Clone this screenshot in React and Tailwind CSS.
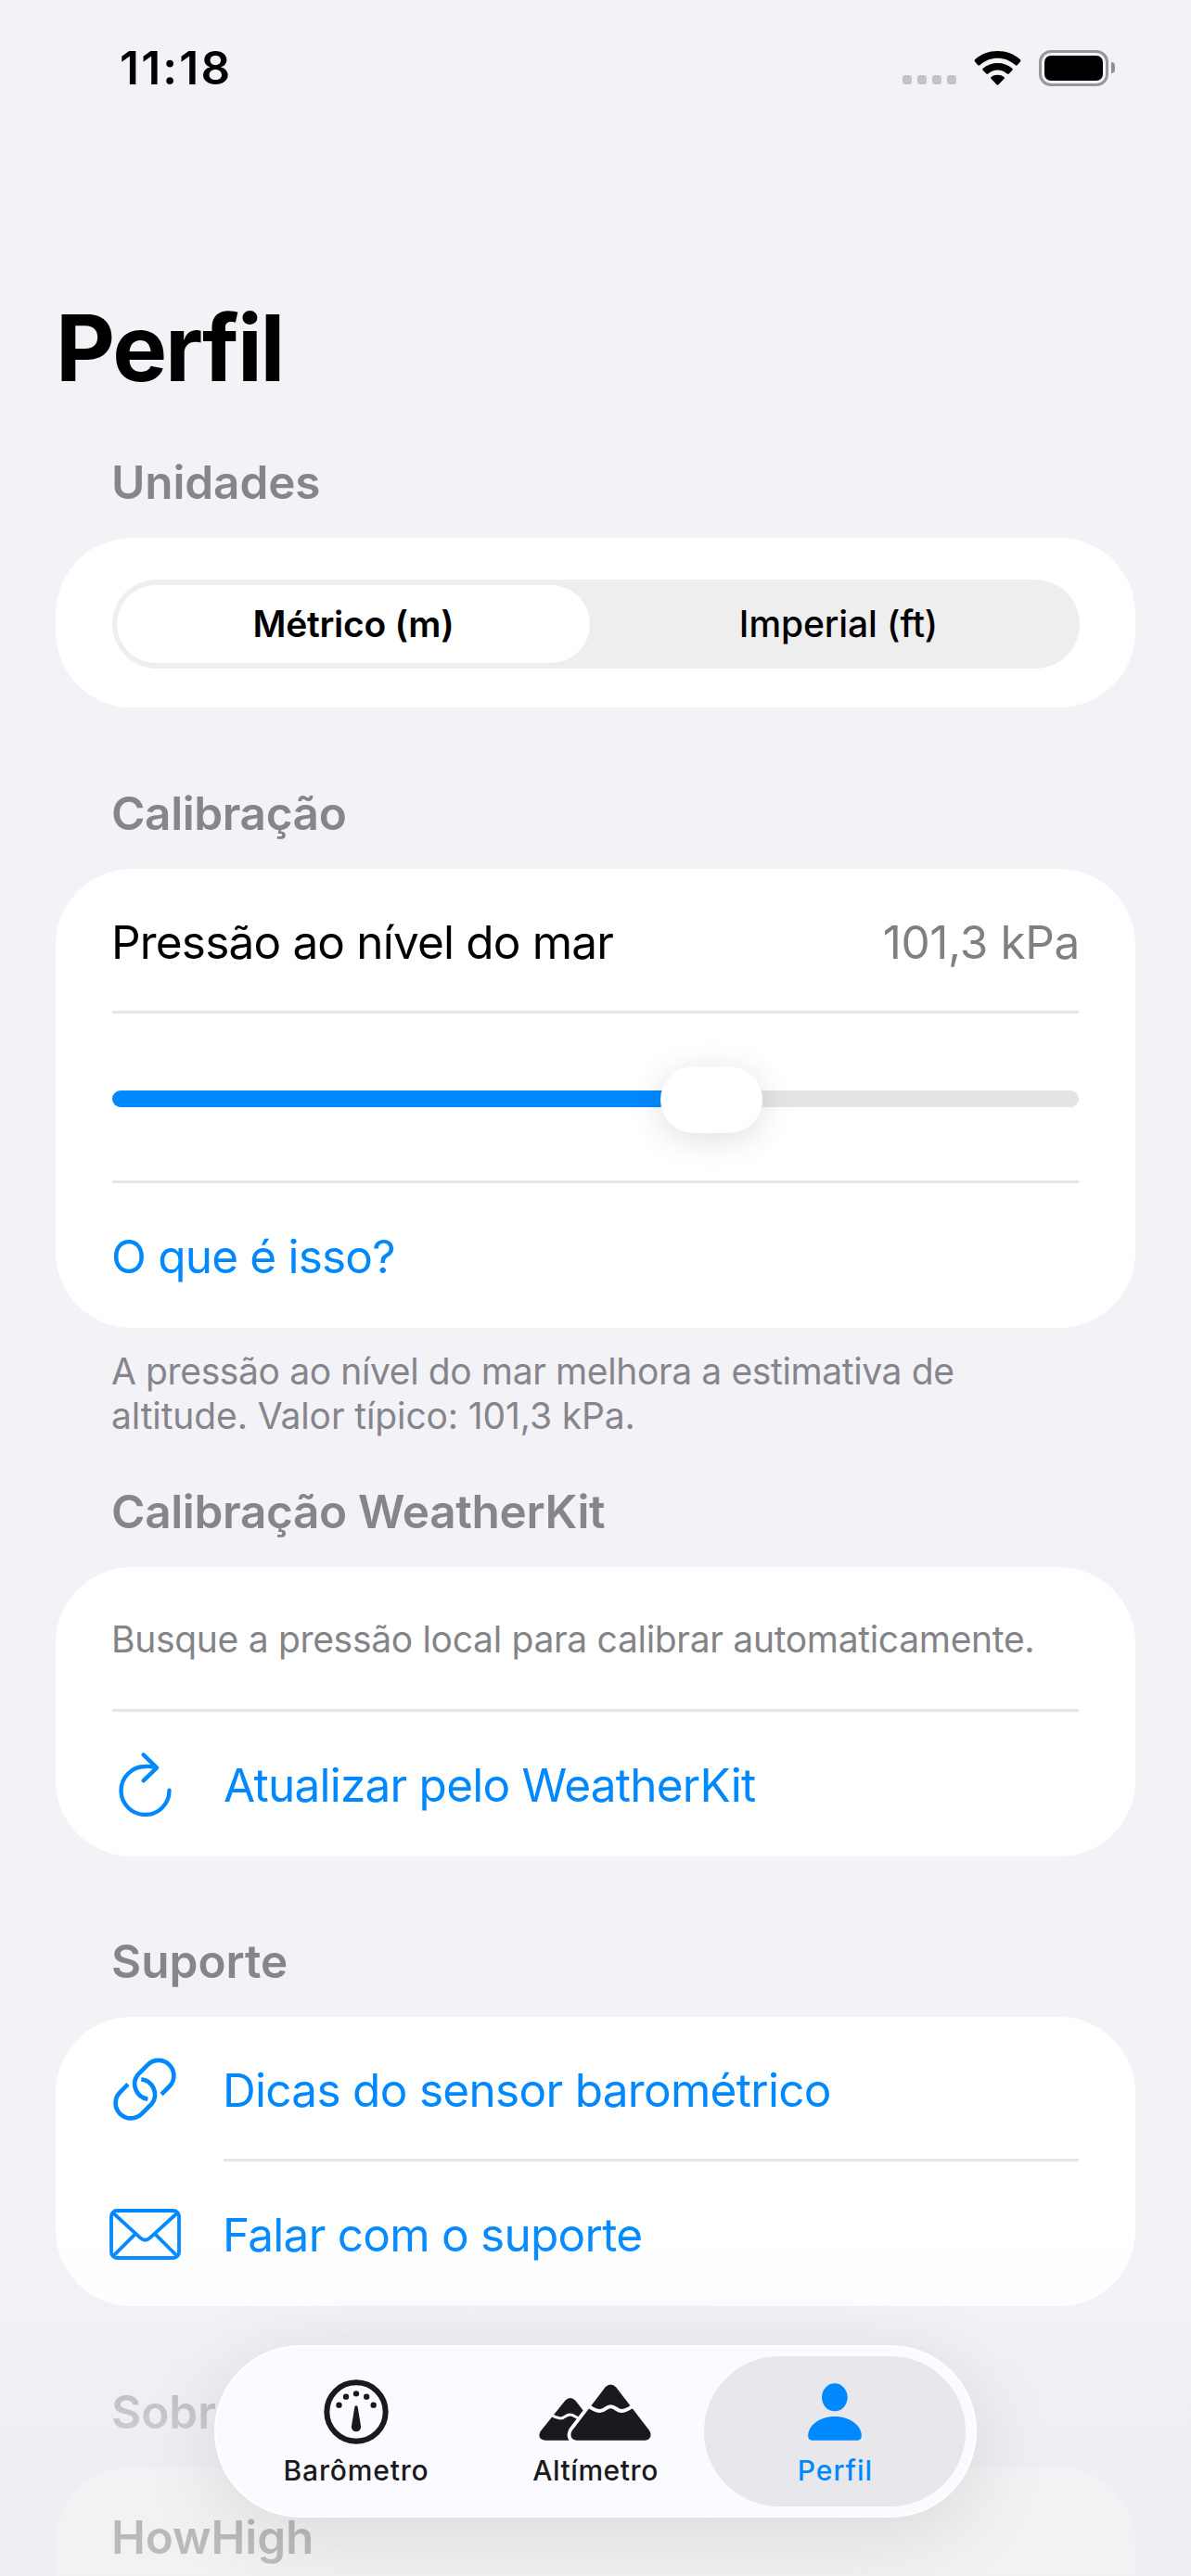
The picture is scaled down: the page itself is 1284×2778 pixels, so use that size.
import React from "react";

function SectionHeader({ children, className = "" }) {
  return (
    <h2 className={`flex h-[120px] items-center pl-[61px] text-[49.5px] font-semibold text-[#85858b] ${className}`}>
      <span className="-ml-px">{children}</span>
    </h2>
  );
}

function Card({ children, className = "" }) {
  return <div className={`rounded-[82px] bg-white px-[61px] ${className}`}>{children}</div>;
}

function LinkRow({ icon, children, divider, className = "" }) {
  return (
    <div className="flex h-[156px] text-[#0088ff]">
      <div className="mr-[50px] flex w-[70px] items-center justify-center">{icon}</div>
      <div
        className={`flex flex-1 items-center text-[49.5px] ${
          divider ? "border-b-[3px] border-[#e6e6e6] pt-[5px]" : "pt-[2px]"
        }`}
      >
        <span className={className}>{children}</span>
      </div>
    </div>
  );
}

function RefreshIcon() {
  return (
    <svg className="h-[69px] w-[57px] shrink-0" viewBox="53 30 171 207" fill="none" stroke="currentColor" strokeWidth="13" strokeLinecap="round" strokeLinejoin="round">
      <path d="M216.500 152A78 78 0 1 1 138.500 75Q155 74 172 79" />
      <path d="M133 37L176 79L133 121" />
    </svg>
  );
}

function LinkIcon() {
  return (
    <svg className="h-[68px] w-[68px] shrink-0" viewBox="35 28 204 204" fill="none" stroke="currentColor" strokeWidth="14">
      <path d="M191 147L217 121A49.500 49.500 0 0 0 147 51L114 84A49.500 49.500 0 0 0 147 162" />
      <path d="M83 114L57 140A49.500 49.500 0 0 0 127 210L160 177A49.500 49.500 0 0 0 126 98" />
    </svg>
  );
}

function MailIcon() {
  return (
    <svg className="h-[55px] w-[77px] shrink-0" viewBox="24 516 231 165" fill="none" stroke="currentColor" strokeWidth="11.500">
      <rect x="30" y="522" width="219" height="153" rx="18" />
      <path d="M34 528L124 610Q139.500 624 155 610L245 528M34 671L107 598M245 671L172 598" />
    </svg>
  );
}

function GaugeIcon() {
  return (
    <svg className="h-[70px] w-[70px]" viewBox="323 138 210 210" fill="currentColor">
      <circle cx="428" cy="243" r="95" fill="none" stroke="currentColor" strokeWidth="18" />
      <circle cx="372.500" cy="221" r="9.500" />
      <circle cx="395" cy="194" r="9.500" />
      <circle cx="428" cy="184" r="9.500" />
      <circle cx="461.500" cy="194" r="9.500" />
      <circle cx="484" cy="221" r="9.500" />
      <path d="M423 227Q428 219 433 227L443.500 291A15.500 15.500 0 0 1 412.500 291Z" />
    </svg>
  );
}

function MountainsIcon() {
  return (
    <svg className="h-[61px] w-[121px]" viewBox="1027 153 363 183">
      <path fill="currentColor" d="M1112 206Q1128 190 1145 206L1230 315V335H1047Q1021 331 1031 308Q1032 305 1035 302Z" />
      <path fill="none" stroke="#fbfbff" strokeWidth="9" d="M1066 252C1080 262 1086 263 1097 264C1110 264 1114 252 1128 252C1142 252 1144 262 1162 266" />
      <path
        fill="currentColor"
        stroke="#fbfbff"
        strokeWidth="23"
        className="[paint-order:stroke]"
        d="M1242 163Q1259 146 1276 163L1384 303C1394 319 1386 335 1370 335H1149C1132 335 1125 319 1135 303Z"
      />
      <path fill="none" stroke="#fbfbff" strokeWidth="12" d="M1180 219C1200 232 1208 240 1224 240C1240 240 1244 226 1259 226C1274 226 1280 240 1294 240C1310 240 1318 232 1338 219" />
    </svg>
  );
}

function PersonIcon() {
  return (
    <svg className="h-[62px] w-[58px]" viewBox="389.500 151 174 186" fill="currentColor">
      <ellipse cx="476" cy="197" rx="41.500" ry="45" />
      <path d="M390 321C390 290 425 259 476 259C527 259 563 290 563 321Q563 336 547 336H406Q390 336 390 321Z" />
    </svg>
  );
}

function Tab({ icon, label, active, className = "" }) {
  return (
    <div
      className={`-mx-3 flex h-[162px] flex-col items-center rounded-full pt-[25px] ${
        active ? "bg-[#e8e8ec] text-[#0088ff]" : "text-[#1a191e]"
      }`}
    >
      <div className="-ml-px flex h-[70px] items-center">{icon}</div>
      <span className={`mt-[10px] text-[30px] leading-[36px] font-medium ${className}`}>{label}</span>
    </div>
  );
}

function StatusBar() {
  return (
    <div className="flex h-[146px] items-center justify-between pr-[82px] pl-[129px]">
      <span className="text-[49.5px] font-semibold tracking-[2.2px]">11:18</span>
      <div className="flex items-center">
        <div className="mt-[26px] mr-[19px] flex gap-[6px]">
          <i className="size-[10px] rounded-[3px] bg-[#c4c3c8]" />
          <i className="size-[10px] rounded-[3px] bg-[#c4c3c8]" />
          <i className="size-[10px] rounded-[3px] bg-[#c4c3c8]" />
          <i className="size-[10px] rounded-[3px] bg-[#c4c3c8]" />
        </div>
        <svg className="mr-[19px] h-[37px] w-[51px]" viewBox="331 41 152 112">
          <path d="M333 69C374 32 440 32 481 69Q484 73 481 76L471 87Q468 89 465 87C432 57 382 57 349 87Q346 89 343 87L333 76Q330 73 333 69Z" />
          <path d="M359 98C386 74 428 74 455 98Q458 101 455 104L444 115Q441 118 438 115C419 99 395 99 376 115Q373 118 370 115L359 104Q356 101 359 98Z" />
          <path d="M386 126C399 117 415 117 428 126Q431 129 428 132L410 151Q407 154 404 151L386 132Q383 129 386 126Z" />
        </svg>
        <div className="h-[39px] w-[75px] rounded-[13px] border-[3px] border-[#97969a] p-[3px]">
          <div className="h-full w-full rounded-[7px] bg-black" />
        </div>
        <div className="ml-[3px] h-[12px] w-[4px] rounded-r-full bg-[#8f8e92]" />
      </div>
    </div>
  );
}

export default function App() {
  return (
    <div className="relative h-[2778px] w-[1284px] overflow-hidden bg-[#f2f2f7] font-[Inter,sans-serif] text-black">
      <StatusBar />

      <main className="px-[60px]">
        <h1 className="mt-[169px] text-[99px] leading-[120px] font-bold tracking-[-2.2px]">Perfil</h1>

        <SectionHeader className="mt-[25px] tracking-[-0.12px]">Unidades</SectionHeader>
        <Card className="h-[183px] pt-[45px]">
          <div className="-mr-px grid h-[96px] grid-cols-[510px_1fr] items-center rounded-full bg-[#eeeeee] p-[5px] text-center text-[39px]">
            <div className="flex h-[84px] items-center justify-center rounded-full bg-white pt-px font-semibold tracking-[-0.25px]">
              Métrico (m)
            </div>
            <div className="pt-px pl-[13px] font-medium tracking-[-0.09px]">Imperial (ft)</div>
          </div>
        </Card>

        <SectionHeader className="mt-[54px] tracking-[-0.38px]">Calibração</SectionHeader>
        <Card>
          <div className="flex h-[156px] items-center justify-between border-b-[3px] border-[#e6e6e6] pt-[5px] text-[49.5px]">
            <span className="-ml-px tracking-[-0.82px]">Pressão ao nível do mar</span>
            <span className="-mr-px tracking-[-0.35px] text-[#808080]">101,3 kPa</span>
          </div>
          <div className="flex h-[183px] items-center border-b-[3px] border-[#e6e6e6] pt-[3px]">
            <div className="relative h-[18px] w-full rounded-full bg-[#e4e4e4]">
              <div className="h-full w-[645px] rounded-l-full bg-[#0088ff]" />
              <div className="absolute top-[-26px] left-[591px] h-[72px] w-[110px] rounded-full bg-white shadow-[0_6px_36px_rgba(0,0,0,0.13)]" />
            </div>
          </div>
          <div className="flex h-[156px] items-center pt-[2px] text-[49.5px] text-[#0088ff]">
            <span className="-ml-px tracking-[-0.8px]">O que é isso?</span>
          </div>
        </Card>
        <p className="mt-[23px] pl-[60px] text-[39px] leading-[48px] text-[#85858b]">
          <span className="block tracking-[-0.38px]">A pressão ao nível do mar melhora a estimativa de</span>
          <span className="block tracking-[-0.11px]">altitude. Valor típico: 101,3 kPa.</span>
        </p>

        <SectionHeader className="mt-[19px] tracking-[-0.33px]">Calibração WeatherKit</SectionHeader>
        <Card>
          <div className="flex h-[156px] items-center border-b-[3px] border-[#e6e6e6] pt-[3px] text-[39px] tracking-[-0.31px] text-[#848488]">
            <span className="-ml-px">Busque a pressão local para calibrar automaticamente.</span>
          </div>
          <LinkRow icon={<RefreshIcon />} className="tracking-[-0.75px]">Atualizar pelo WeatherKit</LinkRow>
        </Card>

        <SectionHeader className="mt-[53px]">Suporte</SectionHeader>
        <Card>
          <LinkRow icon={<LinkIcon />} divider className="-ml-px tracking-[-0.7px]">Dicas do sensor barométrico</LinkRow>
          <LinkRow icon={<MailIcon />} className="-ml-px tracking-[-0.74px]">Falar com o suporte</LinkRow>
        </Card>

        <SectionHeader className="mt-[54px]">Sobre</SectionHeader>
        <Card className="h-[260px]">
          <div className="-ml-px flex h-[150px] items-center text-[49.5px] font-semibold tracking-[-0.1px]">HowHigh</div>
        </Card>
      </main>

      {/* Scroll-edge fade behind the floating tab bar */}
      <div className="absolute inset-x-0 bottom-0 h-[400px] bg-[linear-gradient(to_bottom,rgba(238,238,241,0)_0%,rgba(238,238,241,0.08)_25%,rgba(238,238,241,0.55)_48%,rgba(238,238,241,0.74)_68%,rgba(238,238,241,0.8)_100%)]" />

      <nav className="absolute bottom-[63px] left-[231px] grid h-[186px] w-[822px] grid-cols-3 items-center rounded-full border-2 border-white bg-[#fbfbff] px-[22px] shadow-[0_16px_90px_rgba(0,0,0,0.1)]">
        <Tab icon={<GaugeIcon />} label="Barômetro" className="tracking-[0.83px]" />
        <Tab icon={<MountainsIcon />} label="Altímetro" className="tracking-[0.56px]" />
        <Tab icon={<PersonIcon />} label="Perfil" active className="pl-px tracking-[1px]" />
      </nav>
    </div>
  );
}
